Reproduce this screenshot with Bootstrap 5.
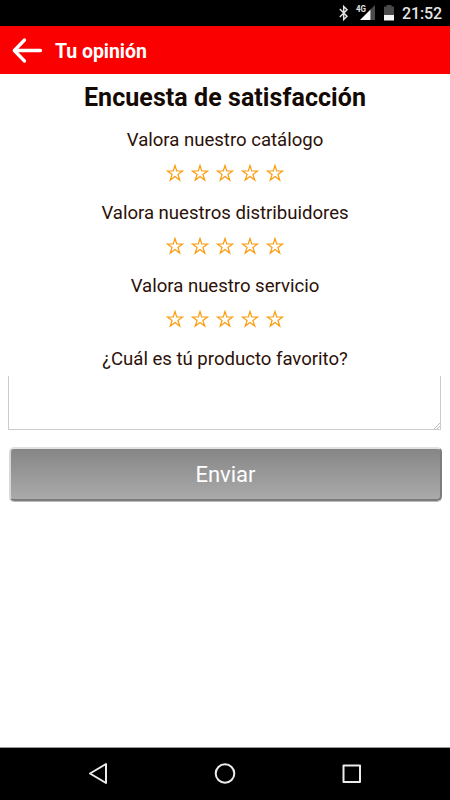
<!DOCTYPE html>
<html lang="es">
<head>
<meta charset="utf-8">
<meta name="viewport" content="width=device-width, initial-scale=1">
<title>Tu opinión</title>
<link href="https://cdn.jsdelivr.net/npm/bootstrap@5.3.0/dist/css/bootstrap.min.css" rel="stylesheet">
<style>
body{font-family:Roboto,sans-serif;height:800px;overflow:hidden;background:#fff}
svg{display:block;flex:none}
.status-bar{height:26px;background:#000;color:#e4e4e4}
.clock{width:40px;font-size:16px;line-height:26px;font-weight:500;padding-top:2px;letter-spacing:-.15px}
.app-bar{height:48px;background:#fb0000}
.app-title{font-size:19.5px;line-height:48px;font-weight:700;color:#fff;padding-top:4px;letter-spacing:-.05px}
.survey-title{font-size:25px;line-height:30px;font-weight:700;color:#150904;padding-top:9px;letter-spacing:.06px}
.question{font-size:18.6px;line-height:24px;color:#2c1108;letter-spacing:-.02px}
.rating-group{height:73px;padding-top:14.500px}
.last-question{padding-top:14.500px}
.stars{gap:7px;margin-top:12.500px}
.stars svg{width:18px;height:18px;fill:none;stroke:#fb9c0c;stroke-width:1.200}
.answer-box{position:relative;margin:5.500px 9px 0 8px}
.answer{height:54px;width:433px;border:1px solid #ccc;border-top:0;border-radius:0;resize:none;display:block;padding:4px;outline:0}
.grip{position:absolute;right:1px;bottom:1px}
.send{height:54px;width:433px;margin:17px 8px 0 9px;border:2px solid;border-color:#e1e1e1 #7c7c7c #7c7c7c #d8d8d8;border-radius:5px;background:linear-gradient(#868686,#aaa);color:#fff;font-size:22px;line-height:48px;box-shadow:0 1px 0 #bbb;padding:2px 0 0}
.nav-keys{height:53px;background:#000;border-top:1px solid #999}
</style>
<script src="https://cdn.jsdelivr.net/npm/bootstrap@5.3.0/dist/js/bootstrap.bundle.min.js"></script>
</head>
<body class="d-flex flex-column">
<div class="status-bar d-flex justify-content-end align-items-center pe-2">
<svg width="64" height="26" viewBox="338 0 64 26">
<path d="M339.800 9l7.200 7.200-3.300 3.300V6.500l3.300 3.300-7.200 7.200" fill="none" stroke="#e4e4e4" stroke-width="1.500"/>
<path d="M370.500 20V9.500l4.500-4.500v15z" fill="#4a4a4a"/><path d="M360 20h10.500V9.500z" fill="#fff"/>
<text x="356" y="12" font-size="8.500" font-weight="700" fill="#e4e4e4" textLength="10" lengthAdjust="spacingAndGlyphs">4G</text>
<path d="M384 6.500h2.500V5h5v1.500h2.500V15h-10z" fill="#4a4a4a"/><path d="M384 15h10v5.500h-10z" fill="#f4f4f4"/>
</svg>
<span class="clock">21:52</span>
</div>
<header class="app-bar d-flex align-items-center">
<svg width="55" height="48" viewBox="0 0 55 48" fill="none" stroke="#fff" stroke-width="3.300" stroke-linecap="round" stroke-linejoin="round"><path d="M14.500 24.500h26M24.500 14l-10.200 10.500L24.500 35"/></svg>
<h1 class="app-title m-0">Tu opinión</h1>
</header>
<main class="flex-grow-1 text-center">
<h2 class="survey-title mb-0">Encuesta de satisfacción</h2>
<section class="rating-group"><div class="question">Valora nuestro catálogo</div><div class="stars d-flex justify-content-center"></div></section>
<section class="rating-group"><div class="question">Valora nuestros distribuidores</div><div class="stars d-flex justify-content-center"></div></section>
<section class="rating-group"><div class="question">Valora nuestro servicio</div><div class="stars d-flex justify-content-center"></div></section>
<label class="question last-question d-block" for="fav">¿Cuál es tú producto favorito?</label>
<div class="answer-box">
<textarea id="fav" class="answer"></textarea>
<svg class="grip" width="6" height="6" viewBox="0 0 6 6" stroke="#b5b5b5" stroke-width=".9"><path d="M0 6l6-6M3 6l3-3"/></svg>
</div>
<button class="send d-block" type="button">Enviar</button>
</main>
<nav class="nav-keys">
<svg width="450" height="52" viewBox="0 0 450 52" fill="none" stroke="#ececec" stroke-width="2" stroke-linejoin="round"><path d="M90 25.500l16-9.500v19z"/><circle cx="225" cy="25.500" r="9.300"/><rect x="343.500" y="17.500" width="16.500" height="16.500"/></svg>
</nav>
<script>
document.querySelectorAll('.stars').forEach(function(row){
  row.innerHTML='<svg viewBox="0 0 18 18"><path d="M9 1.500l1.700 5.500H16.600L11.900 10.400l1.900 5.700L9 12.600l-4.800 3.500 1.900-5.700L1.400 7h5.900z"/></svg>'.repeat(5);
});
</script>
</body>
</html>
